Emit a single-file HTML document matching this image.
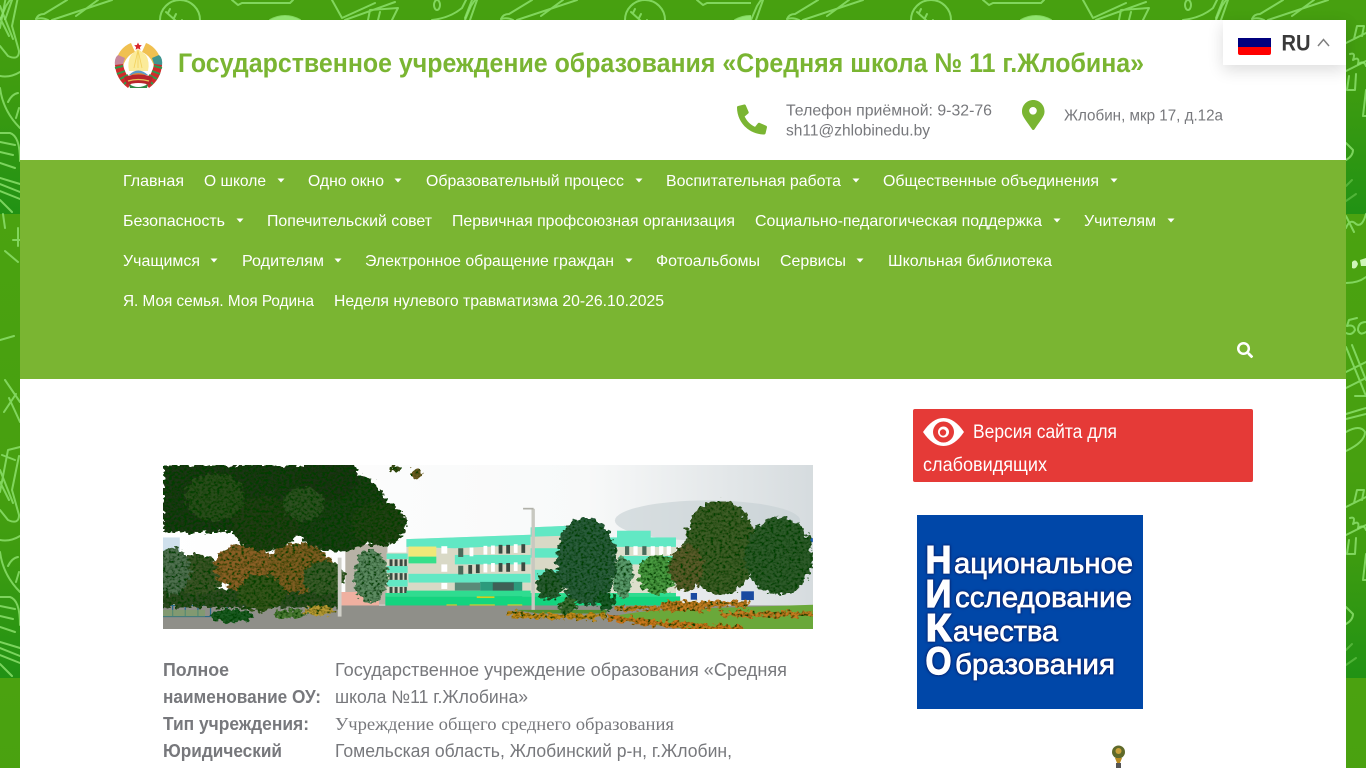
<!DOCTYPE html>
<html lang="ru"><head><meta charset="utf-8"><title>Средняя школа № 11 г.Жлобина</title>
<style>
html,body{margin:0;padding:0;width:1366px;height:768px;overflow:hidden}
body{position:relative;background:linear-gradient(#4ba210 0,#47a010 55%,#3f9c10 72%,#219214 100%) 0 214px/100% 464px repeat-y #46a010}
#c{position:absolute;left:20px;top:20px;width:1326px;height:748px;background:#fff}
#n{position:absolute;left:20px;top:160px;width:1326px;height:219px;background:#7ab532}
#l{position:absolute;left:1223px;top:20px;width:123px;height:45px;background:#fff;box-shadow:0 5px 16px rgba(0,0,0,.14)}
#b{position:absolute;left:913px;top:409px;width:340px;height:73px;background:#e53a37;border-radius:2px}
#k{position:absolute;left:917px;top:515px;width:226px;height:194px;background:#0047a8}
svg{position:absolute;left:0;top:0}
text{font-family:"Liberation Sans","Noto Sans CJK SC",sans-serif}
.nv text,.nv{fill:#fff;font-size:16px}
.g{fill:#77787c;font-size:16px}
.t{fill:#77787c;font-size:18px}
.d{fill:none;stroke:#90e470;stroke-width:2;stroke-opacity:.8;stroke-linecap:round;stroke-linejoin:round}
.ni{filter:drop-shadow(0 0 1px #07226e) drop-shadow(0 0 1px #07226e)}
.ni text{fill:#fff;stroke:#fff}
.bg text{font-weight:bold;stroke-width:1.2px}
.sm text{font-weight:normal;stroke-width:.7px}
</style></head><body>
<svg width="1366" height="768" viewBox="0 0 1366 768">
<defs>
<g id="L" class="d">
<path d="M3 214L5 228M20 447L8 450L0 492M19 456L12 490L19 515Q19 525 8 520L0 510M0 470L13 503M0 482L9 500M2 455L15 460"/>
<path d="M0 540Q10 542 20 536M0 552Q3 575 20 592M8 566Q12 558 18 557M19 572L16 582"/>
<path d="M0 597H10Q20 600 20 625M0 606L15 609M0 616L13 619M0 627L15 632M0 642L20 648M0 648L20 656M0 655L20 663M0 664L12 676"/>
<path d="M5 251L18 262M18 228V246M13 240H20"/>
<path d="M5 380L20 402M16 394L4 412M9 398L20 422M0 340L14 336"/>
</g>
<g id="R" class="d">
<path d="M1346 228Q1350 218 1356 224Q1362 228 1366 214M1346 216L1354 232"/>
<path d="M1346 283Q1358 283 1366 277"/>
<path d="M1357 318L1349 320L1347 326Q1354 324 1355 330Q1352 336 1346 333M1366 322Q1358 322 1358 330Q1360 336 1366 332"/>
<path d="M1346 347L1366 396M1352 345L1366 380M1346 372L1366 362M1346 388L1366 378M1355 396H1366"/>
<path d="M1346 414L1366 408M1346 419L1366 414"/>
<path d="M1346 432Q1360 424 1365 432Q1365 442 1346 451"/>
<path d="M1346 507L1366 497M1354 503L1357 490H1364L1362 500M1346 535L1366 525"/>
<path d="M1350 518Q1356 516 1353 524Q1360 520 1358 528Q1364 524 1366 530"/>
<path d="M1349 540L1347 554H1355L1356 538"/>
<path d="M1366 554L1363 580H1366"/>
<path d="M1346 607L1353 614Q1353 620 1346 624"/>
<path d="M1346 650L1352 644M1346 665L1356 658" stroke-opacity=".4"/>
<path d="M1352 262Q1356 258 1358 264Q1356 270 1352 268ZM1360 260L1366 258V266L1361 266Z" fill="#cdf5b8" stroke="none"/>
</g>
<g id="T" class="d">
<path d="M0 20L6 6L10 0M12 0L5 20"/>
<path d="M36 19Q38 14 44 14L67 0M52 20L112 0M76 16L98 0M36 19Q42 17 48 20"/>
<circle cx="180" cy="20" r="20"/>
<path d="M166 12L186 30M170 9L168 13M176 14L174 18M182 20L180 24"/>
<path d="M232 0L238 5L242 3L290 3L293 0"/>
<path d="M270 20Q285 12 300 20Z" fill="#90e470"/>
<path d="M332 0L342 18L375 3M345 20L395 2M368 20L370 10L398 8L392 20M380 12L378 20"/>
<ellipse cx="437" cy="5" rx="3" ry="5"/>
<path d="M432 20Q450 18 462 8L466 0M472 0L465 18"/>
</g>
<clipPath id="p"><rect x="163" y="465" width="650" height="164"/></clipPath>
<filter id="f" x="-5%" y="-5%" width="110%" height="110%"><feTurbulence type="fractalNoise" baseFrequency=".08" numOctaves="2" seed="4" result="n"/><feDisplacementMap in="SourceGraphic" in2="n" scale="30" xChannelSelector="R" yChannelSelector="G" result="d"/><feTurbulence type="fractalNoise" baseFrequency=".14" numOctaves="2" seed="9"/><feColorMatrix type="matrix" values="0 0 0 0 0  0 0 0 0 .05  0 0 0 0 0  3 0 0 0 -1.2" result="m"/><feComposite in="m" in2="d" operator="in" result="s"/><feMerge><feMergeNode in="d"/><feMergeNode in="s"/></feMerge></filter>
<linearGradient id="s" x1="0" x2="1" y1="0" y2="0"><stop offset="0" stop-color="#fff"/><stop offset=".65" stop-color="#f8f9f9"/><stop offset="1" stop-color="#d5dbde"/></linearGradient>
</defs>
<use href="#L"/><use href="#L" y="-464"/>
<use href="#R"/><use href="#R" y="-464"/>
<clipPath id="tc"><rect x="0" y="0" width="751" height="20"/></clipPath>
<clipPath id="tc2"><rect x="751" y="0" width="615" height="20"/></clipPath>
<g clip-path="url(#tc)"><use href="#T"/><use href="#T" x="465"/></g>
<g clip-path="url(#tc2)"><use href="#T" x="751"/><use href="#T" x="1216"/></g>
</svg>
<div id="c"></div><div id="n"></div><div id="k"></div><div id="b"></div><div id="l"></div>
<svg width="1366" height="768" viewBox="0 0 1366 768">
<!-- emblem -->
<g>
<path d="M118 74A23 23 0 0 1 131 43L135 52Q125 56 122 70Z" fill="#f0c050"/>
<path d="M159 74A23 23 0 0 0 146 43L142 52Q152 56 155 70Z" fill="#f0c050"/>
<path d="M138 49L131 55Q127 62 129 71L148 71Q150 62 146 55Z" fill="#fbeb9a"/>
<path d="M138 50L134 68M138 50V68M138 50L142 68" stroke="#f2d25e" stroke-width=".8" fill="none"/>
<path d="M138 42.500l1.200 2.500 2.600.3-1.900 1.800.5 2.600-2.400-1.300-2.400 1.300.5-2.600-1.900-1.800 2.600-.3z" fill="#d8262c"/>
<path d="M118 55Q114 58 115 66L122 67L125 58Z" fill="#c8889c"/>
<path d="M159 55Q163 58 162 66L155 67L152 58Z" fill="#3f9590"/>
<path d="M115 65Q116 79 128 88L133 81Q125 76 123 64Z" fill="#cf2b2b"/>
<path d="M162 65Q161 79 149 88L144 81Q152 76 154 64Z" fill="#cf2b2b"/>
<path d="M115 68L123 66M117 74L125 71M120 79L128 75M124 84L131 79M162 68L154 66M160 74L152 71M157 79L149 75M153 84L146 79" stroke="#2f9a4a" stroke-width="2"/>
<path d="M129 75Q138 66 148 75Z" fill="#5b9ac9"/><path d="M131 75Q138 71 146 75Z" fill="#d98c3a"/>
<path d="M124 77Q138 72 153 77L150 85Q138 81 127 85Z" fill="#b8262b"/>
<path d="M128 81Q138 78 149 81" stroke="#e8c85a" stroke-width="1.200" fill="none"/>
<path d="M129 84Q138 90 148 84L147 88H130Z" fill="#2f8a44"/>
</g>
<text x="178" y="72" font-size="27" font-weight="bold" fill="#7ab532" textLength="966" lengthAdjust="spacingAndGlyphs">Государственное учреждение образования «Средняя школа № 11 г.Жлобина»</text>
<!-- phone -->
<g transform="translate(767,104.500) scale(-.0586,.0586)"><path fill="#7ab532" d="M493.4 24.6l-104-24c-11.3-2.6-22.9 3.3-27.5 13.9l-48 112c-4.2 9.8-1.4 21.3 6.900 28l60.600 49.600c-36 76.700-98.900 140.500-177.200 177.200l-49.600-60.600c-6.800-8.300-18.200-11.100-28-6.900l-112 48C3.900 366.500-2 378.100.6 389.400l24 104C27.100 504.200 36.700 512 48 512c256.100 0 464-207.500 464-464 0-11.200-7.700-20.900-18.600-23.400z"/></g>
<text class="g" x="786" y="115.500" textLength="206" lengthAdjust="spacingAndGlyphs">Телефон приёмной: 9-32-76</text>
<text class="g" x="786" y="135.500" textLength="144" lengthAdjust="spacingAndGlyphs">sh11@zhlobinedu.by</text>
<!-- pin -->
<g transform="translate(1022,100) scale(.0586,.0586)"><path fill="#7ab532" d="M172.268 501.670C26.970 291.031 0 269.413 0 192 0 85.961 85.961 0 192 0s192 85.961 192 192c0 77.413-26.970 99.031-172.268 309.670-9.535 13.774-29.930 13.773-39.464 0z"/></g>
<circle cx="1033" cy="110.800" r="3.800" fill="#fff"/>
<text class="g" x="1064" y="120.500" textLength="159" lengthAdjust="spacingAndGlyphs">Жлобин, мкр 17, д.12а</text>
<!-- language -->
<path d="M1238 38H1271V47H1238Z" fill="#00007e"/>
<path d="M1238 47H1271V53Q1271 55 1269 55H1240Q1238 55 1238 53Z" fill="#f00"/>
<text x="1281.500" y="50.500" font-size="22" font-weight="bold" fill="#3a3a3a" textLength="29" lengthAdjust="spacingAndGlyphs">RU</text>
<path d="M1318 46L1323.500 39.500L1329 46" fill="none" stroke="#7f7f7f" stroke-width="1.500"/>
<!-- nav -->
<g class="nv">
<text x="123" y="186" textLength="61" lengthAdjust="spacingAndGlyphs">Главная</text>
<text x="204" y="186" textLength="62" lengthAdjust="spacingAndGlyphs">О школе</text>
<text x="308" y="186" textLength="76" lengthAdjust="spacingAndGlyphs">Одно окно</text>
<text x="426" y="186" textLength="198" lengthAdjust="spacingAndGlyphs">Образовательный процесс</text>
<text x="666" y="186" textLength="175" lengthAdjust="spacingAndGlyphs">Воспитательная работа</text>
<text x="883" y="186" textLength="216" lengthAdjust="spacingAndGlyphs">Общественные объединения</text>
<text x="123" y="226" textLength="102" lengthAdjust="spacingAndGlyphs">Безопасность</text>
<text x="267" y="226" textLength="165" lengthAdjust="spacingAndGlyphs">Попечительский совет</text>
<text x="452" y="226" textLength="283" lengthAdjust="spacingAndGlyphs">Первичная профсоюзная организация</text>
<text x="755" y="226" textLength="287" lengthAdjust="spacingAndGlyphs">Социально-педагогическая поддержка</text>
<text x="1084" y="226" textLength="72" lengthAdjust="spacingAndGlyphs">Учителям</text>
<text x="123" y="266" textLength="77" lengthAdjust="spacingAndGlyphs">Учащимся</text>
<text x="242" y="266" textLength="82" lengthAdjust="spacingAndGlyphs">Родителям</text>
<text x="365" y="266" textLength="249" lengthAdjust="spacingAndGlyphs">Электронное обращение граждан</text>
<text x="656" y="266" textLength="104" lengthAdjust="spacingAndGlyphs">Фотоальбомы</text>
<text x="780" y="266" textLength="66" lengthAdjust="spacingAndGlyphs">Сервисы</text>
<text x="888" y="266" textLength="164" lengthAdjust="spacingAndGlyphs">Школьная библиотека</text>
<text x="123" y="306" textLength="191" lengthAdjust="spacingAndGlyphs">Я. Моя семья. Моя Родина</text>
<text x="334" y="306" textLength="330" lengthAdjust="spacingAndGlyphs">Неделя нулевого травматизма 20-26.10.2025</text>
</g>
<path fill="#fff" d="M277.500 178.500h7l-3.500 4zM394.500 178.500h7l-3.500 4zM635.500 178.500h7l-3.500 4zM852.500 178.500h7l-3.500 4zM1110.500 178.500h7l-3.500 4zM236.500 218.500h7l-3.500 4zM1053.500 218.500h7l-3.500 4zM1167.500 218.500h7l-3.500 4zM210.500 258.500h7l-3.500 4zM334.500 258.500h7l-3.500 4zM625.500 258.500h7l-3.500 4zM856.500 258.500h7l-3.500 4z"/>
<g transform="translate(1237,342) scale(.0314,.0314)"><path fill="#fff" d="M505 442.700L405.300 343c-4.500-4.500-10.600-7-17-7H372c27.600-35.300 44-79.700 44-128C416 93.100 322.900 0 208 0S0 93.100 0 208s93.100 208 208 208c48.300 0 92.700-16.400 128-44v16.300c0 6.400 2.500 12.500 7 17l99.700 99.700c9.400 9.400 24.600 9.400 33.900 0l28.300-28.300c9.400-9.400 9.400-24.600.1-34zM208 336c-70.700 0-128-57.200-128-128 0-70.700 57.200-128 128-128 70.700 0 128 57.200 128 128 0 70.700-57.200 128-128 128z"/></g>
<!-- photo -->
<g clip-path="url(#p)"><g transform="translate(160,460) scale(.4212,.3367)">
<rect x="0" y="10" width="1560" height="500" fill="url(#s)"/>
<ellipse cx="1300" cy="180" rx="220" ry="60" fill="#c4ced2" opacity=".6"/>
<rect x="7" y="230" width="40" height="60" fill="#cfe0ec"/>
<rect x="440" y="250" width="100" height="180" fill="#b8b2a6"/>
<rect x="430" y="392" width="90" height="40" fill="#efb0a0"/>
<rect x="1065" y="230" width="160" height="175" fill="#dcdfcc"/>
<rect x="1065" y="230" width="160" height="28" fill="#62e8c4"/>
<rect x="1085" y="210" width="80" height="22" fill="#62e8c4"/>
<rect x="1090" y="285" width="135" height="25" fill="#62e8c4"/>
<path d="M585 235L880 222V405H585Z" fill="#d9d9c6"/>
<path d="M585 235L880 222V252L700 262L585 258Z" fill="#62e8c4"/>
<rect x="700" y="282" width="180" height="28" fill="#62e8c4"/>
<rect x="590" y="338" width="290" height="26" fill="#62e8c4"/>
<rect x="538" y="275" width="50" height="130" fill="#d9d9c6"/>
<rect x="538" y="315" width="50" height="20" fill="#62e8c4"/>
<rect x="538" y="356" width="50" height="20" fill="#62e8c4"/>
<rect x="538" y="278" width="50" height="16" fill="#62e8c4"/>
<rect x="590" y="257" width="66" height="30" fill="#f0e878"/>
<rect x="590" y="287" width="66" height="20" fill="#35e08a"/>
<path d="M880 200L990 194V405H880Z" fill="#d9d9c6"/>
<path d="M880 200L990 194V224L880 228Z" fill="#62e8c4"/>
<rect x="880" y="262" width="75" height="28" fill="#62e8c4"/>
<rect x="890" y="326" width="70" height="30" fill="#62e8c4"/>
<g fill="#fff"><rect x="735" y="260" width="9" height="26"/><rect x="768" y="255" width="9" height="26"/><rect x="804" y="252" width="9" height="26" fill="#3a4a40"/><rect x="822" y="252" width="9" height="26" fill="#3a4a40"/><rect x="786" y="254" width="9" height="26"/><rect x="840" y="250" width="9" height="26"/><rect x="858" y="250" width="9" height="26" fill="#3a4a40"/><rect x="708" y="262" width="12" height="26" fill="#4a6a5a"/>
<rect x="708" y="314" width="12" height="26" fill="#4a6a5a"/><rect x="732" y="312" width="9" height="26" fill="#3a4a40"/><rect x="750" y="310" width="9" height="26" fill="#3a4a40"/><rect x="768" y="308" width="9" height="26"/><rect x="786" y="306" width="9" height="26"/><rect x="804" y="306" width="9" height="26" fill="#3a4a40"/><rect x="822" y="306" width="9" height="26" fill="#3a4a40"/><rect x="840" y="304" width="9" height="26"/><rect x="858" y="304" width="9" height="26" fill="#3a4a40"/>
<rect x="1104" y="256" width="10" height="26" fill="#4a6a5a"/><rect x="1124" y="256" width="10" height="26"/><rect x="1145" y="256" width="10" height="26" fill="#4a6a5a"/><rect x="1165" y="256" width="10" height="26"/><rect x="1185" y="256" width="10" height="26"/><rect x="1203" y="256" width="10" height="26"/>
<rect x="668" y="256" width="14" height="22"/><rect x="668" y="310" width="14" height="22"/><rect x="668" y="365" width="14" height="18"/>
<rect x="545" y="295" width="7" height="20" fill="#3a4a40"/><rect x="557" y="295" width="7" height="20" fill="#3a4a40"/><rect x="569" y="295" width="7" height="20" fill="#3a4a40"/><rect x="580" y="295" width="6" height="20" fill="#3a4a40"/>
<rect x="545" y="336" width="7" height="20" fill="#3a4a40"/><rect x="557" y="336" width="7" height="20" fill="#3a4a40"/><rect x="569" y="336" width="7" height="20" fill="#3a4a40"/><rect x="580" y="336" width="6" height="20" fill="#3a4a40"/>
<rect x="545" y="377" width="7" height="20" fill="#3a4a40"/><rect x="557" y="377" width="7" height="20" fill="#3a4a40"/><rect x="569" y="377" width="7" height="20" fill="#3a4a40"/><rect x="580" y="377" width="6" height="20" fill="#3a4a40"/></g>
<rect x="700" y="364" width="60" height="24" fill="#5a8a78"/>
<rect x="760" y="362" width="100" height="44" fill="#2c9a7c"/>
<rect x="790" y="364" width="50" height="36" fill="#3f5f56"/>
<path d="M535 405H1225V395H880V388H585V395H535Z" fill="#2fdc90"/>
<rect x="535" y="405" width="700" height="28" fill="#14d47f"/>
<rect x="680" y="429" width="25" height="5" fill="#e4d020"/><rect x="735" y="429" width="60" height="6" fill="#e4d020"/><rect x="825" y="429" width="35" height="5" fill="#e4d020"/><rect x="752" y="405" width="42" height="5" fill="#d0d020"/>
<rect x="7" y="432" width="1545" height="75" fill="#8f8f89"/>
<path d="M1060 470Q1120 445 1300 440L1552 430V507H1280Z" fill="#6aa83a"/>
<path d="M840 445H1060V456H900Z" fill="#4f8f30"/>
<g stroke="#2a6a8a" stroke-width="3" fill="none"><path d="M7 432H200M7 465H120M30 432V465M60 432V465M90 432V465M120 432V465M160 432V445"/></g>
<rect x="7" y="445" width="100" height="20" fill="#7aa060" opacity=".6"/>
<rect x="1380" y="390" width="30" height="26" fill="#1a4aa0"/><rect x="1260" y="395" width="15" height="20" fill="#1a4aa0"/><rect x="1510" y="232" width="40" height="12" fill="#1a5ab0"/>
<g filter="url(#f)">
<path d="M825 455Q950 472 1060 462" stroke="#c48a1e" stroke-width="16" fill="none"/>
<path d="M1065 468Q1200 490 1380 502" stroke="#c8761e" stroke-width="20" fill="none"/>
<path d="M1080 440H1300M1190 428H1400M1330 458H1552" stroke="#c47c20" stroke-width="16" fill="none"/>
<ellipse cx="500" cy="345" rx="40" ry="80" fill="#5c8a60"/>
<rect x="7" y="380" width="420" height="58" fill="#2f4a22"/>
<circle cx="90" cy="340" r="60" fill="#3a5228"/><ellipse cx="30" cy="330" rx="40" ry="70" fill="#4f6f4f"/>
<circle cx="200" cy="320" r="70" fill="#8a5e28"/><circle cx="330" cy="320" r="75" fill="#7d5c24"/><circle cx="240" cy="395" r="55" fill="#34521e"/><circle cx="390" cy="350" r="50" fill="#3a5a2a"/>
<ellipse cx="170" cy="462" rx="50" ry="20" fill="#1e5a20"/><ellipse cx="380" cy="448" rx="35" ry="15" fill="#b89a30"/><ellipse cx="310" cy="458" rx="40" ry="12" fill="#4a7a30"/>
<rect x="7" y="15" width="400" height="200" fill="#1d3612"/><circle cx="420" cy="150" r="120" fill="#1f3a14"/><circle cx="520" cy="190" r="65" fill="#243f16"/><circle cx="250" cy="190" r="80" fill="#203a14"/><circle cx="400" cy="50" r="70" fill="#1c3312"/><circle cx="130" cy="110" r="70" fill="#2a4c1c"/><circle cx="340" cy="130" r="50" fill="#2e5024"/>
<circle cx="610" cy="40" r="14" fill="#6a5a20"/><circle cx="560" cy="25" r="12" fill="#3a4a18"/>
<ellipse cx="925" cy="370" rx="32" ry="45" fill="#2a5a30"/>
<ellipse cx="1012" cy="300" rx="72" ry="130" fill="#2a5c3a"/>
<ellipse cx="1100" cy="350" rx="22" ry="65" fill="#5a9a6a"/>
<ellipse cx="1180" cy="340" rx="45" ry="60" fill="#4a9a40"/>
<ellipse cx="1330" cy="260" rx="85" ry="140" fill="#3d5c28"/>
<ellipse cx="1470" cy="285" rx="80" ry="115" fill="#2f5a2c"/>
<ellipse cx="1250" cy="320" rx="40" ry="70" fill="#5a5a2a"/>
<ellipse cx="1058" cy="420" rx="20" ry="30" fill="#1e5a2a"/><ellipse cx="968" cy="432" rx="20" ry="25" fill="#3a6a30"/>
</g>
<rect x="882" y="145" width="8" height="300" fill="#c8c8c0"/><rect x="862" y="142" width="25" height="5" fill="#b0b0a8"/><rect x="422" y="290" width="9" height="175" fill="#cfcfc8"/>
</g></g>
<!-- table -->
<g class="t">
<text x="163" y="676" font-weight="bold" textLength="66" lengthAdjust="spacingAndGlyphs">Полное</text>
<text x="163" y="703" font-weight="bold" textLength="158" lengthAdjust="spacingAndGlyphs">наименование ОУ:</text>
<text x="163" y="730" font-weight="bold" textLength="146" lengthAdjust="spacingAndGlyphs">Тип учреждения:</text>
<text x="163" y="757" font-weight="bold" textLength="119" lengthAdjust="spacingAndGlyphs">Юридический</text>
<text x="335" y="676" textLength="452" lengthAdjust="spacingAndGlyphs">Государственное учреждение образования «Средняя</text>
<text x="335" y="703" textLength="193" lengthAdjust="spacingAndGlyphs">школа №11 г.Жлобина»</text>
<text x="335" y="730" style="font-family:'Liberation Serif',serif" textLength="339" lengthAdjust="spacingAndGlyphs">Учреждение общего среднего образования</text>
<text x="335" y="757" textLength="397" lengthAdjust="spacingAndGlyphs">Гомельская область, Жлобинский р-н, г.Жлобин,</text>
</g>
<!-- eye button -->
<path d="M923 432C929 423 936 418 943.500 418C951 418 958 423 964 432C958 441 951 446 943.500 446C936 446 929 441 923 432Z" fill="#fff"/>
<circle cx="943.500" cy="432" r="10.500" fill="#e53a37"/><circle cx="943.500" cy="432" r="5.500" fill="#fff"/><circle cx="943" cy="432.500" r="3.200" fill="#e53a37"/>
<text x="973" y="438" font-size="19" fill="#fff" textLength="144" lengthAdjust="spacingAndGlyphs">Версия сайта для</text>
<text x="923" y="471" font-size="19" fill="#fff" textLength="124" lengthAdjust="spacingAndGlyphs">слабовидящих</text>
<!-- NIKO -->
<g class="ni">
<g class="bg">
<text x="925.500" y="573" font-size="39" textLength="26" lengthAdjust="spacingAndGlyphs">Н</text>
<text x="925.500" y="607" font-size="39" textLength="26" lengthAdjust="spacingAndGlyphs">И</text>
<text x="925.500" y="641" font-size="39" textLength="26" lengthAdjust="spacingAndGlyphs">К</text>
<text x="925.500" y="674" font-size="39" textLength="26" lengthAdjust="spacingAndGlyphs">О</text>
</g>
<g class="sm">
<text x="954" y="573" font-size="29" textLength="179" lengthAdjust="spacingAndGlyphs">ациональное</text>
<text x="955" y="607" font-size="29" textLength="177" lengthAdjust="spacingAndGlyphs">сследование</text>
<text x="953" y="641" font-size="29" textLength="105" lengthAdjust="spacingAndGlyphs">ачества</text>
<text x="955" y="674" font-size="29" textLength="160" lengthAdjust="spacingAndGlyphs">бразования</text>
</g></g>
<!-- trophy -->
<circle cx="1118.500" cy="752" r="6.500" fill="#5f6a2a"/><circle cx="1118.500" cy="751" r="3" fill="#c9a13a"/>
<path d="M1115 758H1122L1120 763H1117Z" fill="#b88a20"/><rect x="1116" y="763" width="5" height="5" fill="#555"/>
</svg>
</body></html>
